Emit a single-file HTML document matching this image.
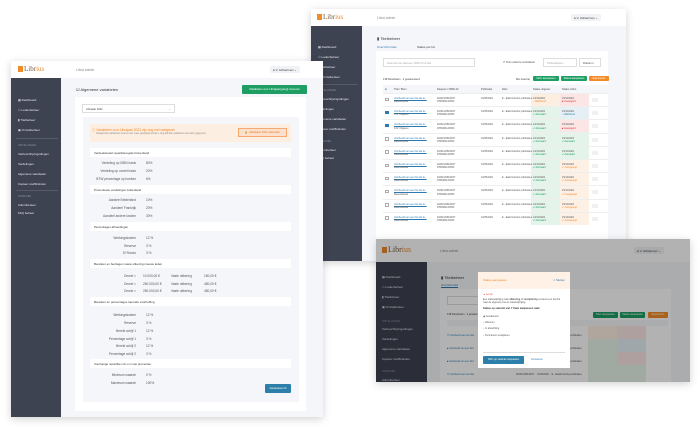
<!DOCTYPE html>
<html><head><meta charset="utf-8"><style>
*{margin:0;padding:0;box-sizing:border-box}
body{width:700px;height:429px;background:#fff;position:relative;overflow:hidden;font-family:"Liberation Sans",sans-serif;color:#444;font-size:3.2px}
.a{position:absolute}
.win{position:absolute;background:#f5f6fa;box-shadow:0 2px 8px rgba(0,0,0,.18);overflow:hidden}
.hdr{position:absolute;left:0;right:0;top:0;background:#fff}
.side{position:absolute;left:0;background:#3e4352}
.logo{position:absolute;font-family:"Liberation Serif",serif;font-size:7px;color:#7a5a3a}
.logo b{display:inline-block;width:5px;height:6px;background:#f08a2a;margin-right:1px;vertical-align:-1px}
.logo span{color:#e98a30}
.nav{position:absolute;color:#e7e9ee;font-size:3px}
.sec{position:absolute;color:#8a90a0;font-size:2.5px}
.user{position:absolute;background:#f1f2f5;border-radius:2px;font-size:3px;color:#333;padding:1.5px 3px}
.bar{position:absolute;background:#fff;font-size:3px;color:#333;padding:3px 4px}
.lbl{position:absolute;text-align:right;width:60px;color:#555}
.val{position:absolute;color:#555}
.btn{position:absolute;color:#fff;font-size:2.6px;text-align:center;border-radius:1px}
.cell{position:absolute;font-size:2.6px}
.row{position:absolute;left:72px;width:226px;height:13.2px;border-top:.4px solid #eee;font-size:2.4px;line-height:3.2px;color:#555}
.row span{position:absolute;top:3px;white-space:nowrap}
.row .cb{position:absolute;left:2px;top:3.5px;width:3.5px;height:3.5px;border:.4px solid #aaa;background:#fff}
.row .cb.on{background:#2d7ab0;border-color:#2d7ab0}
.row .t{left:11px;color:#2d7ab0;text-decoration:underline}
.row .t2{left:11px;top:6.3px}
.row .d{left:54px}.row .d2{left:54px;top:6.3px}
.row .p{left:98px}.row .n{left:119px}
.row .s1{left:150px}.row .s1b{left:150px;top:6.3px}
.row .s2{left:179px}.row .s2b{left:179px;top:6.3px}
.row .x{position:absolute;left:209px;top:4px;width:6px;height:4px;background:#eef0f4;border-radius:.5px}
.g{color:#1e9e63}.o{color:#f08a2a}.r{color:#d43c3c}.b{color:#2d7ab0}
</style></head><body>

<!-- Window B -->
<div class="win" style="left:311px;top:9px;width:315px;height:252px">
 <div class="hdr" style="height:17px"></div>
 <div class="logo" style="left:6px;top:4px"><b></b>Libr<span>ius</span></div>
 <div class="a" style="left:66px;top:7px;font-size:3.5px;color:#888">Libra admin</div>
 <div class="user" style="left:260px;top:5px">● V. Achterman ⌄</div>
 <div class="side" style="top:17px;width:51px;height:240px"></div>
 <div class="nav" style="left:7px;top:36px">▦ Dashboard</div>
 <div class="nav" style="left:7px;top:46px">⚇ Ledenbeheer</div>
 <div class="nav" style="left:7px;top:56px">▮ Titelbeheer</div>
 <div class="nav" style="left:7px;top:66px">▣ Omzetbeheer</div>
 <div class="a" style="left:5px;top:75px;width:42px;height:.5px;background:#555b6a"></div>
 <div class="sec" style="left:7px;top:80px">INSTELLINGEN</div>
 <div class="nav" style="left:7px;top:88px">Verbeschrijvingsdingen</div>
 <div class="nav" style="left:7px;top:98px">Verdelingen</div>
 <div class="nav" style="left:7px;top:108px">Algemene variabelen</div>
 <div class="nav" style="left:7px;top:118px">Kopieer coëfficiënten</div>
 <div class="sec" style="left:7px;top:131px">OVERIGEN</div>
 <div class="nav" style="left:7px;top:139px">Adminbeheer</div>
 <div class="nav" style="left:7px;top:147px">FAQ beheer</div>
 <div class="a" style="left:66px;top:27px;font-size:4px;color:#333">▮ Titelbeheer</div>
 <div class="a" style="left:66px;top:36px;font-size:3px;color:#2d7ab0;border-bottom:.7px solid #2d7ab0;padding-bottom:1.5px">Overzicht titels</div>
 <div class="a" style="left:106px;top:36px;font-size:3px;color:#333">Status per lid</div>
 <div class="a" style="left:65px;top:42px;width:232px;height:215px;background:#fff"></div>
 <div class="a" style="left:72px;top:49px;width:92px;height:9px;border:.5px solid #ddd;font-size:2.6px;color:#aaa;padding:3px">Zoek titel van dieposo, ISBN-13 of titel</div>
 <div class="a" style="left:192px;top:52px;font-size:2.6px">☐ Toon enkel te controleren</div>
 <div class="a" style="left:232px;top:49px;width:34px;height:9px;border:.5px solid #ddd;font-size:2.6px;color:#aaa;padding:3px">Publicatiejaar ⌄</div>
 <div class="a" style="left:268px;top:49px;width:22px;height:9px;border:.5px solid #ddd;font-size:2.6px;padding:3px">Filteren ▾</div>
 <div class="a" style="left:72px;top:69px;font-size:2.6px">138 Resultaten · 2 geselecteerd</div>
 <div class="a" style="left:205px;top:69px;font-size:2.6px">Met selectie</div>
 <div class="btn" style="left:222px;top:67px;width:26px;height:5px;background:#1e9e63;line-height:5px">NAC aanpassen</div>
 <div class="btn" style="left:250px;top:67px;width:26px;height:5px;background:#1e9e63;line-height:5px">Status aanpassen</div>
 <div class="btn" style="left:278px;top:67px;width:20px;height:5px;background:#f28c28;line-height:5px">Exporteren</div>
 <div class="a" style="left:72px;top:76px;width:226px;height:8px;background:#f5f6fa"></div>
 <div class="cell" style="left:74px;top:79px;color:#2d7ab0">■</div>
 <div class="cell" style="left:83px;top:79px">Titel / Bron</div>
 <div class="cell" style="left:126px;top:79px">Dieposo / ISBN-13</div>
 <div class="cell" style="left:170px;top:79px">Publicatie</div>
 <div class="cell" style="left:191px;top:79px">NAC</div>
 <div class="cell" style="left:222px;top:79px">Status uitgever</div>
 <div class="cell" style="left:251px;top:79px">Status Libris</div>
 <div class="a" style="left:220px;top:84px;width:29px;height:13px;background:#fdeee2"></div>
 <div class="a" style="left:220px;top:97px;width:29px;height:119px;background:#e5f4ea"></div>
 <div class="a" style="left:249px;top:84px;width:29px;height:13px;background:#fbe5e5"></div>
 <div class="a" style="left:249px;top:97px;width:29px;height:13px;background:#e5eff4"></div>
 <div class="a" style="left:249px;top:110px;width:29px;height:13px;background:#fbe5e5"></div>
 <div class="a" style="left:249px;top:123px;width:29px;height:27px;background:#e5f4ea"></div>
 <div class="a" style="left:249px;top:150px;width:29px;height:66px;background:#fdf0e5"></div>

 <div class="row" style="top:84px"><i class="cb"></i><span class="t">Voorbeeld van een titel die la...</span><span class="t2">Meeuwboeks</span><span class="d">D/2021/05430/37</span><span class="d2">9789464143093</span><span class="p">31/05/2022</span><span class="n">E - Elektronische publicaties</span><span class="s1">13/12/2022</span><span class="s1b o">◔ Wachtend</span><span class="s2">15/12/2022</span><span class="s2b r">■ Geweigerd</span><i class="x"></i></div>
 <div class="row" style="top:97.2px"><i class="cb on"></i><span class="t">Voorbeeld van een titel die la...</span><span class="t2">CJV Uitgaven</span><span class="d">D/2021/05430/37</span><span class="d2">9789464143093</span><span class="p">31/05/2022</span><span class="n">E - Elektronische publicaties</span><span class="s1">13/12/2022</span><span class="s1b g">✔ Aanvaard</span><span class="s2">15/12/2022</span><span class="s2b b">◔ Wachtend</span><i class="x"></i></div>
 <div class="row" style="top:110.4px"><i class="cb on"></i><span class="t">Voorbeeld van een titel die la...</span><span class="t2">CJV Uitgaven</span><span class="d">D/2021/05430/37</span><span class="d2">9789464143093</span><span class="p">31/05/2022</span><span class="n">E - Elektronische publicaties</span><span class="s1">13/12/2022</span><span class="s1b g">✔ Aanvaard</span><span class="s2">15/12/2022</span><span class="s2b r">■ Geweigerd</span><i class="x"></i></div>
 <div class="row" style="top:123.6px"><i class="cb"></i><span class="t">Voorbeeld van een titel die la...</span><span class="t2">Meeuwboeks</span><span class="d">D/2021/05430/37</span><span class="d2">9789464143093</span><span class="p">31/05/2022</span><span class="n">E - Elektronische publicaties</span><span class="s1">13/12/2022</span><span class="s1b g">✔ Aanvaard</span><span class="s2">15/12/2022</span><span class="s2b g">✔ Aanvaard</span><i class="x"></i></div>
 <div class="row" style="top:136.8px"><i class="cb"></i><span class="t">Voorbeeld van een titel die la...</span><span class="t2">Meeuwboeks</span><span class="d">D/2021/05430/37</span><span class="d2">9789464143093</span><span class="p">31/05/2022</span><span class="n">E - Elektronische publicaties</span><span class="s1">13/12/2022</span><span class="s1b g">✔ Aanvaard</span><span class="s2">15/12/2022</span><span class="s2b g">✔ Aanvaard</span><i class="x"></i></div>
 <div class="row" style="top:150px"><i class="cb"></i><span class="t">Voorbeeld van een titel die la...</span><span class="t2">Meeuwboeks</span><span class="d">D/2021/05430/37</span><span class="d2">9789464143093</span><span class="p">31/05/2022</span><span class="n">E - Elektronische publicaties</span><span class="s1">13/12/2022</span><span class="s1b g">✔ Aanvaard</span><span class="s2">15/12/2022</span><span class="s2b o">✔ Voorgelegd</span><i class="x"></i></div>
 <div class="row" style="top:163.2px"><i class="cb"></i><span class="t">Voorbeeld van een titel die la...</span><span class="t2">Meeuwboeks</span><span class="d">D/2021/05430/37</span><span class="d2">9789464143093</span><span class="p">31/05/2022</span><span class="n">E - Elektronische publicaties</span><span class="s1">13/12/2022</span><span class="s1b g">✔ Aanvaard</span><span class="s2">15/12/2022</span><span class="s2b o">✔ Voorgelegd</span><i class="x"></i></div>
 <div class="row" style="top:176.4px"><i class="cb"></i><span class="t">Voorbeeld van een titel die la...</span><span class="t2">Meeuwboeks</span><span class="d">D/2021/05430/37</span><span class="d2">9789464143093</span><span class="p">31/05/2022</span><span class="n">E - Elektronische publicaties</span><span class="s1">13/12/2022</span><span class="s1b g">✔ Aanvaard</span><span class="s2">15/12/2022</span><span class="s2b o">✔ Voorgelegd</span><i class="x"></i></div>
 <div class="row" style="top:189.6px"><i class="cb"></i><span class="t">Voorbeeld van een titel die la...</span><span class="t2">Meeuwboeks</span><span class="d">D/2021/05430/37</span><span class="d2">9789464143093</span><span class="p">31/05/2022</span><span class="n">E - Elektronische publicaties</span><span class="s1">13/12/2022</span><span class="s1b g">✔ Aanvaard</span><span class="s2">15/12/2022</span><span class="s2b o">✔ Voorgelegd</span><i class="x"></i></div>
 <div class="row" style="top:202.8px"><i class="cb"></i><span class="t">Voorbeeld van een titel die la...</span><span class="t2">Meeuwboeks</span><span class="d">D/2021/05430/37</span><span class="d2">9789464143093</span><span class="p">31/05/2022</span><span class="n">E - Elektronische publicaties</span><span class="s1">13/12/2022</span><span class="s1b g">✔ Aanvaard</span><span class="s2">15/12/2022</span><span class="s2b o">✔ Voorgelegd</span><i class="x"></i></div>
</div>

<!-- Window A -->
<div class="win" style="left:11px;top:61px;width:312px;height:356px">
 <div class="hdr" style="height:17px"></div>
 <div class="logo" style="left:7px;top:4px"><b></b>Libr<span>ius</span></div>
 <div class="a" style="left:65px;top:7px;font-size:3.5px;color:#888">Libra admin</div>
 <div class="user" style="left:259px;top:5px">● V. Achterman ⌄</div>
 <div class="side" style="top:17px;width:50px;height:340px"></div>
 <div class="nav" style="left:7px;top:37px">▦ Dashboard</div>
 <div class="nav" style="left:7px;top:47px">⚇ Ledenbeheer</div>
 <div class="nav" style="left:7px;top:57px">▮ Titelbeheer</div>
 <div class="nav" style="left:7px;top:67px">▣ Omzetbeheer</div>
 <div class="a" style="left:5px;top:77px;width:42px;height:.5px;background:#555b6a"></div>
 <div class="sec" style="left:7px;top:83px">INSTELLINGEN</div>
 <div class="nav" style="left:7px;top:91px">Verbeschrijvingsdingen</div>
 <div class="nav" style="left:7px;top:101px">Verdelingen</div>
 <div class="nav" style="left:7px;top:111px">Algemene variabelen</div>
 <div class="nav" style="left:7px;top:121px">Kopieer coëfficiënten</div>
 <div class="a" style="left:5px;top:129px;width:42px;height:.5px;background:#555b6a"></div>
 <div class="sec" style="left:7px;top:134px">OVERIGEN</div>
 <div class="nav" style="left:7px;top:142px">Adminbeheer</div>
 <div class="nav" style="left:7px;top:150px">FAQ beheer</div>
 <div class="a" style="left:65px;top:26px;font-size:4px;color:#333">☑ Algemene variabelen</div>
 <div class="btn" style="left:231px;top:24px;width:65px;height:9px;background:#1e9e63;line-height:9px;font-size:2.8px">Variabelen voor Librajaar(gang) invoeren</div>
 <div class="a" style="left:64px;top:36px;width:231px;height:314px;background:#fff"></div>
 <div class="a" style="left:71px;top:43px;width:93px;height:9px;border:.5px solid #ddd;font-size:2.6px;padding:3px">Librajaar 2022<span style="float:right">⌄</span></div>
 <div class="a" style="left:72px;top:56px;width:216px;height:285px;background:#f5f6fa"></div>
 <div class="a" style="left:79px;top:63px;width:201px;height:18px;background:#fdeee2"></div>
 <div class="a" style="left:81px;top:66px;font-size:3.3px;color:#f08a2a">ⓘ Variabelen voor Librajaar 2022 zijn nog niet vastgezet</div>
 <div class="a" style="left:85px;top:71px;font-size:2.4px;color:#888">Vastgezette variabelen kunnen niet meer gewijzigd worden, zorg dat alle variabelen van deze gegevens</div>
 <div class="a" style="left:227px;top:67px;width:49px;height:9px;background:#fce0cb;border:.6px solid #f5a870;font-size:2.6px;color:#e07a20;text-align:center;line-height:8px">🔒 Variabelen 2022 vastzetten</div>

 <div class="bar" style="left:79px;top:87px;width:201px;height:9px">Verdeelsleutel repartitieregels binnenland</div>
 <div class="lbl" style="left:65px;top:100px">Verdeling op ISBN basis</div><div class="val" style="left:135px;top:100px">80%</div>
 <div class="lbl" style="left:65px;top:108px">Verdeling op omzet basis</div><div class="val" style="left:135px;top:108px">20%</div>
 <div class="lbl" style="left:65px;top:116px">BTW percentage op boeken</div><div class="val" style="left:135px;top:116px">6%</div>
 <div class="bar" style="left:79px;top:124px;width:201px;height:9px">Procentuele verdelingen buitenland</div>
 <div class="lbl" style="left:65px;top:137px">Aandeel Nederland</div><div class="val" style="left:135px;top:137px">10%</div>
 <div class="lbl" style="left:65px;top:145px">Aandeel Frankrijk</div><div class="val" style="left:135px;top:145px">20%</div>
 <div class="lbl" style="left:65px;top:153px">Aandeel andere landen</div><div class="val" style="left:135px;top:153px">30%</div>
 <div class="bar" style="left:79px;top:161px;width:201px;height:9px">Percentages afhoudingen</div>
 <div class="lbl" style="left:65px;top:175px">Werkingskosten</div><div class="val" style="left:135px;top:175px">12 %</div>
 <div class="lbl" style="left:65px;top:183px">Reserve</div><div class="val" style="left:135px;top:183px">3 %</div>
 <div class="lbl" style="left:65px;top:190px">SI Rondo</div><div class="val" style="left:135px;top:190px">3 %</div>
 <div class="bar" style="left:79px;top:198px;width:201px;height:9px">Bereiken en bedragen vaste uitkering nieuwe leden</div>
 <div class="lbl" style="left:65px;top:213px">Omzet &lt;</div><div class="val" style="left:132px;top:213px">10.000,00 €</div><div class="val" style="left:160px;top:213px">Vaste uitkering</div><div class="val" style="left:193px;top:213px">150,00 €</div>
 <div class="lbl" style="left:65px;top:221px">Omzet &lt;</div><div class="val" style="left:132px;top:221px">250.000,00 €</div><div class="val" style="left:160px;top:221px">Vaste uitkering</div><div class="val" style="left:193px;top:221px">450,00 €</div>
 <div class="lbl" style="left:65px;top:228px">Omzet &gt;</div><div class="val" style="left:132px;top:228px">250.000,00 €</div><div class="val" style="left:160px;top:228px">Vaste uitkering</div><div class="val" style="left:193px;top:228px">450,00 €</div>
 <div class="bar" style="left:79px;top:236px;width:201px;height:9px">Bereiken en percentages lopende voorheffing</div>
 <div class="lbl" style="left:65px;top:252px">Werkingskosten</div><div class="val" style="left:135px;top:252px">12 %</div>
 <div class="lbl" style="left:65px;top:260px">Reserve</div><div class="val" style="left:135px;top:260px">3 %</div>
 <div class="lbl" style="left:65px;top:268px">Bereik schijf 1</div><div class="val" style="left:135px;top:268px">12 %</div>
 <div class="lbl" style="left:65px;top:276px">Percentage schijf 1</div><div class="val" style="left:135px;top:276px">3 %</div>
 <div class="lbl" style="left:65px;top:283px">Bereik schijf 2</div><div class="val" style="left:135px;top:283px">12 %</div>
 <div class="lbl" style="left:65px;top:291px">Percentage schijf 2</div><div class="val" style="left:135px;top:291px">3 %</div>
 <div class="bar" style="left:79px;top:298px;width:201px;height:9px">Voorlopige repartitie min en max procenten</div>
 <div class="lbl" style="left:65px;top:312px">Minimum waarde</div><div class="val" style="left:135px;top:312px">0 %</div>
 <div class="lbl" style="left:65px;top:320px">Maximum waarde</div><div class="val" style="left:135px;top:320px">100%</div>
 <div class="btn" style="left:254px;top:323px;width:26px;height:9px;background:#2b7fa8;line-height:9px;font-size:2.8px">Aanpassen ⧉</div>
</div>

<!-- Window C -->
<div class="win" style="left:376px;top:239px;width:314px;height:143px">
 <div class="hdr" style="height:23px"></div>
 <div class="logo" style="left:6px;top:6px;font-size:8px"><b></b>Libr<span>ius</span></div>
 <div class="a" style="left:64px;top:10px;font-size:3.5px;color:#888">Libra admin</div>
 <div class="user" style="left:258px;top:8px">● V. Achterman ⌄</div>
 <div class="side" style="top:23px;width:51px;height:120px"></div>
 <div class="nav" style="left:6px;top:36px">▦ Dashboard</div>
 <div class="nav" style="left:6px;top:46px">⚇ Ledenbeheer</div>
 <div class="nav" style="left:6px;top:56px">▮ Titelbeheer</div>
 <div class="nav" style="left:6px;top:66px">▣ Omzetbeheer</div>
 <div class="sec" style="left:6px;top:81px">INSTELLINGEN</div>
 <div class="nav" style="left:6px;top:88px">Verbeschrijvingsdingen</div>
 <div class="nav" style="left:6px;top:98px">Verdelingen</div>
 <div class="nav" style="left:6px;top:108px">Algemene variabelen</div>
 <div class="nav" style="left:6px;top:118px">Kopieer coëfficiënten</div>
 <div class="sec" style="left:6px;top:131px">OVERIGEN</div>
 <div class="nav" style="left:6px;top:139px">Adminbeheer</div>
 <div class="a" style="left:65px;top:36px;font-size:4px;color:#333">▮ Titelbeheer</div>
 <div class="a" style="left:65px;top:45px;font-size:2.6px;color:#2d7ab0;border-bottom:.6px solid #2d7ab0">Overzicht titels</div>
 <div class="a" style="left:64px;top:50px;width:231px;height:93px;background:#fff"></div>
 <div class="a" style="left:71px;top:57px;width:92px;height:9px;border:.5px solid #ddd"></div>
 <div class="a" style="left:71px;top:74px;font-size:2.6px">138 Resultaten · 2 geselecteerd</div>
 <div class="btn" style="left:217px;top:73px;width:25px;height:6px;background:#1e9e63;line-height:6px">NAC aanpassen</div>
 <div class="btn" style="left:244px;top:73px;width:25px;height:6px;background:#1e9e63;line-height:6px">Status aanpassen</div>
 <div class="btn" style="left:272px;top:73px;width:20px;height:6px;background:#f28c28;line-height:6px">Exporteren</div>
 <div class="a" style="left:71px;top:81px;width:221px;height:6px;background:#f5f6fa"></div>
 <div class="a" style="left:212px;top:87px;width:29px;height:13px;background:#fdeee2"></div>
 <div class="a" style="left:212px;top:100px;width:29px;height:43px;background:#e5f4ea"></div>
 <div class="a" style="left:241px;top:87px;width:29px;height:13px;background:#fbe5e5"></div>
 <div class="a" style="left:241px;top:100px;width:29px;height:13px;background:#e5eff4"></div>
 <div class="a" style="left:241px;top:113px;width:29px;height:13px;background:#fbe5e5"></div>
 <div class="a" style="left:241px;top:126px;width:29px;height:17px;background:#e5f4ea"></div>
 <div class="a" style="left:71px;top:90px;font-size:2.4px;line-height:13px;color:#2d7ab0">☐ Voorbeeld van een titel<br>■ Voorbeeld van een titel<br>■ Voorbeeld van een titel<br>☐ Voorbeeld van een titel</div>
 <div class="a" style="left:140px;top:90px;font-size:2.4px;line-height:13px;color:#555">D/2021/05430/37 &nbsp;&nbsp; 31/05/2022 &nbsp;&nbsp; E - Elektronische publicaties<br>D/2021/05430/37 &nbsp;&nbsp; 31/05/2022 &nbsp;&nbsp; E - Elektronische publicaties<br>D/2021/05430/37 &nbsp;&nbsp; 31/05/2022 &nbsp;&nbsp; E - Elektronische publicaties<br>D/2021/05430/37 &nbsp;&nbsp; 31/05/2022 &nbsp;&nbsp; E - Elektronische publicaties</div>
 <div class="a" style="left:0;top:0;width:314px;height:143px;background:rgba(0,0,0,.3)"></div>
 <div class="a" style="left:102px;top:33px;width:92px;height:96px;background:#fff"></div>
 <div class="a" style="left:102px;top:33px;width:92px;height:17px;background:#fff1e6;font-size:3px;color:#f08a2a;padding:6px 5px">Status aanpassen<span style="float:right;color:#2d7ab0">× Sluiten</span></div>
 <div class="a" style="left:107px;top:54px;font-size:2.4px;color:#e04040">▲ Let op</div>
 <div class="a" style="left:107px;top:59px;width:82px;font-size:2.4px;line-height:3.3px;color:#555">Een statuswijziging naar <b>afkeuring</b> of <b>verwijdering</b> verstuurt een bericht naar de uitgeverij met de statuswijziging.</div>
 <div class="a" style="left:107px;top:68px;font-size:2.6px;color:#333;font-weight:bold">Status op selectie van 7 titels aanpassen naar:</div>
 <div class="a" style="left:107px;top:75px;font-size:2.4px;line-height:6.2px;color:#555">◉ Goedkeuren<br>○ Afkeuren<br>○ In afwachting<br>○ Permanent verwijderen</div>
 <div class="a" style="left:107px;top:113px;width:82px;height:.4px;background:#ddd"></div>
 <div class="btn" style="left:107px;top:117px;width:41px;height:8px;background:#2b7fa8;line-height:8px">NAC op selectie toepassen</div>
 <div class="a" style="left:155px;top:119px;font-size:2.6px;color:#2d7ab0">Annuleren</div>
</div>

</body></html>
